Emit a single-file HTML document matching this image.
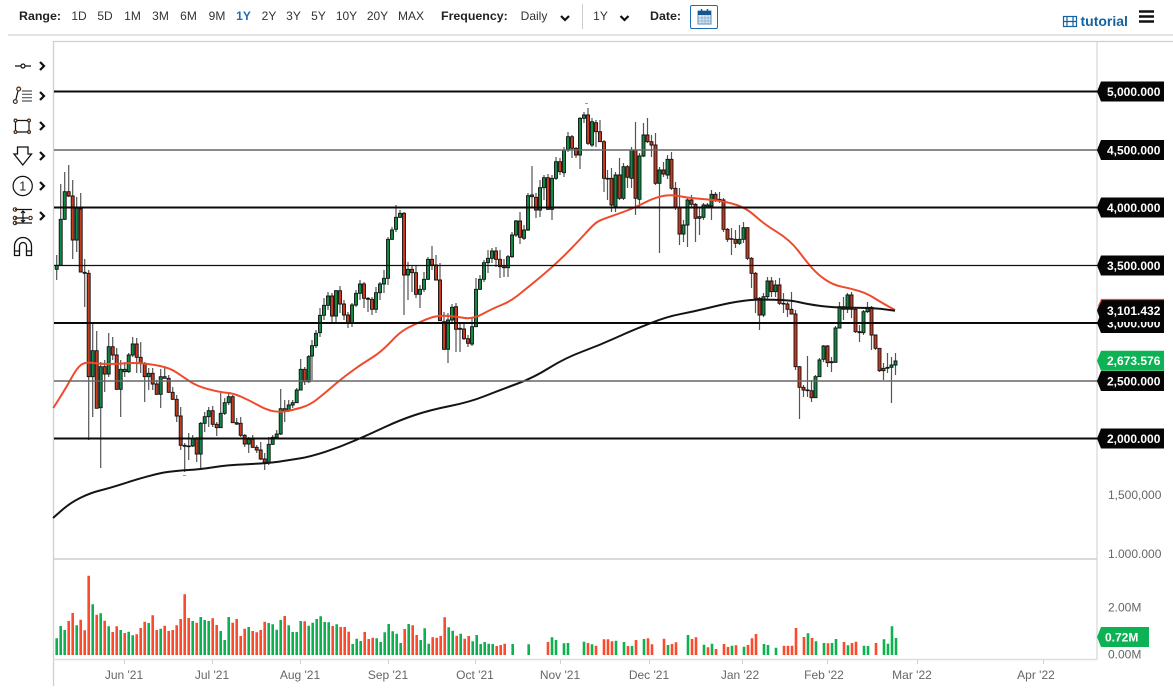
<!DOCTYPE html>
<html><head><meta charset="utf-8"><title>Chart</title>
<style>
html,body{margin:0;padding:0;background:#fff;width:1173px;height:693px;overflow:hidden}
svg{display:block;font-family:"Liberation Sans",sans-serif;filter:blur(.3px)}
.h{font-size:12px;fill:#333;text-anchor:middle}
.b{font-size:12.4px;font-weight:bold;fill:#222}
.ax{font-size:12px;fill:#666}
.t{font-size:12px;fill:#666;text-anchor:middle}
.lb{font-size:12px;font-weight:bold;fill:#fff}
</style></head><body>
<svg width="1173" height="693" viewBox="0 0 1173 693" xmlns="http://www.w3.org/2000/svg">
<!-- header -->
<text class="b" x="19" y="20">Range:</text>
<text class="h" x="79" y="20">1D</text><text class="h" x="105" y="20">5D</text><text class="h" x="132.5" y="20">1M</text><text class="h" x="160.5" y="20">3M</text><text class="h" x="188.5" y="20">6M</text><text class="h" x="217" y="20">9M</text>
<text class="h" x="243.5" y="20" style="fill:#1c6db3;font-weight:bold">1Y</text>
<text class="h" x="269" y="20">2Y</text><text class="h" x="293.5" y="20">3Y</text><text class="h" x="318.5" y="20">5Y</text><text class="h" x="346.5" y="20">10Y</text><text class="h" x="377.5" y="20">20Y</text><text class="h" x="411" y="20">MAX</text>
<text class="b" x="441" y="20">Frequency:</text><text class="h" x="534" y="20">Daily</text>
<path d="M561 16l4 4 4-4M620.5 16l4 4 4-4" fill="none" stroke="#111" stroke-width="2.2"/>
<path d="M582.5 4V29" stroke="#ccc"/>
<text class="h" x="600.5" y="20">1Y</text>
<text class="b" x="650" y="20">Date:</text>
<rect x="690.5" y="5.5" width="27" height="23" rx="1.5" fill="#fff" stroke="#1c6db3"/>
<g stroke="#14548f" fill="none"><rect x="698" y="11" width="13" height="13" stroke="#5b8db8" fill="#dbe9f4"/><path d="M698.5 11.5h12v3h-12z" fill="#14548f"/><path d="M701.5 9v3M707.5 9v3" stroke-width="1.5"/><path d="M702 15v9M705 15v9M708 15v9M698 18h13M698 21h13" stroke="#7ea6c8" stroke-width=".7"/></g>
<g fill="none" stroke="#14629f" stroke-width="1.2"><rect x="1063.5" y="16.5" width="13" height="10"/><path d="M1067 16.5v10M1073 16.5v10M1063.5 21.5h13" /></g>
<text x="1080.5" y="26" style="font-size:14px;font-weight:bold;fill:#14629f">tutorial</text>
<path d="M1139 11.5h15M1139 16.5h15M1139 21.5h15" stroke="#111" stroke-width="2.4"/>
<path d="M8 35H1173" stroke="#d2d2d2" stroke-width="1.2"/>
<path d="M53 41.5H1173" stroke="#cfcfcf" stroke-width="1.3"/>
<path d="M53.5 41V686" stroke="#cfcfcf" stroke-width="1.3"/>
<path d="M1097 41V660" stroke="#d8d8d8" stroke-width="1.3"/>

<!-- tools -->
<g fill="none" stroke="#111" stroke-width="1.2">
<path d="M15 66h6M25 66h6"/><circle cx="23" cy="66" r="2"/>
<path d="M16 99L18 91"/><circle cx="18.7" cy="89" r="1.9" stroke="#4a2a10"/><circle cx="15.3" cy="101.5" r="1.9" stroke="#4a2a10"/>
<path d="M22 91h10M22 94.3h10M22 97.7h10M22 101h10" stroke="#555"/>
<path d="M15.5 122V130.5M29 122V130.5M17 120.5H27.5M17 132H27.5"/><circle cx="15.5" cy="120.5" r="1.4" stroke="#4a2a10"/><circle cx="29" cy="120.5" r="1.4" stroke="#4a2a10"/><circle cx="15.5" cy="132" r="1.4" stroke="#4a2a10"/><circle cx="29" cy="132" r="1.4" stroke="#4a2a10"/>
<path d="M17.5 147H28V154H31.5L22.8 165 14 154H17.5Z" stroke-width="1.3"/>
<circle cx="22.7" cy="186" r="9.6"/>
<path d="M15 209.5H32M15 218H28M15 223H32"/><path d="M23 211V222M21 213l2-2 2 2M21 220l2 2 2-2"/>
<circle cx="15" cy="209.5" r="1.7" stroke="#4a2a10"/><circle cx="15" cy="218" r="1.7" stroke="#4a2a10"/><circle cx="15" cy="223" r="1.7" stroke="#4a2a10"/><circle cx="30.5" cy="218" r="1.7" stroke="#4a2a10"/>
<path d="M14.5 255.5V246a8.5 8.5 0 0 1 17 0V255.5h-5V246a3.5 3.5 0 0 0-7 0V255.5zM14.5 251h5M26.5 251h5" stroke-width="1.3"/>
</g>
<text x="22.7" y="190.5" style="font-size:12.5px;fill:#222;text-anchor:middle">1</text>
<path d="M40 62l4 4-4 4M40 92l4 4-4 4M40 122l4 4-4 4M40 152l4 4-4 4M40 182l4 4-4 4M40 212l4 4-4 4" fill="none" stroke="#111" stroke-width="2.2"/>

<g>
<!-- wicks -->
<path fill="none" stroke="#555" stroke-width="1.2" d="M56.7 255V280M60.7 184V265M64.7 172V220M68.7 165V197M72.7 180V259M76.7 197V252M80.7 193V272M84.7 259V307M88.7 270V440M92.7 323V417M96.7 331V408M100.7 362V468M104.7 360V392M108.7 333V377M112.7 337V360M116.7 348V390M120.7 360V417M124.7 362V377M128.7 353V373M132.7 337V357M136.7 338V373M140.7 342V373M144.7 362V402M148.7 368V390M152.7 368V390M156.7 380V395M160.7 369V408M164.7 366V378M168.7 375V393M172.7 387V400M176.7 395V422M180.7 407V450M184.7 443V472M188.7 433V460M192.7 435V447M196.7 437V462M200.7 422V470M204.7 412V432M208.7 407V427M212.7 406V427M216.7 422V436M220.7 393V428M224.7 398V415M228.7 392V405M232.7 395V423M236.7 418V425M240.7 417V437M244.7 434V447M248.7 437V453M252.7 435V448M256.7 445V453M260.7 442V460M264.7 453V470M268.7 437V465M272.7 435V445M276.7 430V437M280.7 389V435M284.7 400V422M288.7 400V412M292.7 400V408M296.7 388V403M300.7 359V390M304.7 367V385M308.7 355V383M312 340V380M316 330V348M320 308V337M324 298V320M328 292V310M332 293V324M336 290V323M340 286V313M344 300V320M348 312V328M352 303V327M356 290V307M360 280V300M364 282V308M368 297V312M372 297V315M376 287V313M380 282V300M384 270V293M388 237V285M392 227V240M396 205V232M400 210V218M404 212V315M408 262V300M412 265V292M416 265V298M420 285V308M424 272V292M428 257V280M432 246V270M436 255V280M440 263V320M444 312V350M448 313V363M452 304V322M456 303V352M460 322V352M464 323V340M468 335V347M472 318V346M476 278V327M480 275V290M484 260V282M488 250V273M492 248V263M496 247V267M500 250V278M504 259V277M508 255V277M512 232V258M516 220V237M520 212V244M524 225V240M528 193V231M532 166V207M536 193V218M540 180V217M544 175V200M548 174V210M552 175V220M556 157V180M560 158V175M564 147V177M568 132V152M572 135V158M576 147V158M580 117V169M584 112V123M588 108V145M592 118V147M596 120V147M600 120V142M604 140V192M607.5 170V200M611.5 168V212M615.5 172V212M619.5 158V200M623.5 163V200M627.5 165V188M631.5 147V188M635.5 122V215M639.5 153V207M643.5 123V157M647.5 118V143M651.5 135V157M655.5 133V185M659.5 167V253M663.5 162V177M667.5 155V179M671.5 152V190M675.5 182V210M679.5 188V245M683.5 220V242M687.5 197V247M691.5 195V207M695.5 203V242M699.5 207V235M703.5 203V220M707.5 203V208M711.5 190V220M715.5 192V202M719.5 192V203M723.5 198V232M727.5 228V242M731.5 228V255M735.5 230V248M739.5 225V245M743.5 222V243M747.5 227V260M751.5 257V288M755.5 272V313M759.5 297V330M763.5 293V317M767.5 277V300M771.5 277V297M775.5 280V297M779.5 278V305M783.5 293V313M787.5 302V317M791.5 292V314M795.5 310V370M799.5 366V419M803.5 385V397M807.5 356V397M811.5 380V402M815.5 375V398M819.5 358V377M823.5 345V362M827.5 345V367M831.5 357V372M835.5 326V363M839.5 302V328M843.5 297V320M847.5 293V313M851.5 292V318M855.5 308V333M859.5 325V342M863.5 310V335M867.5 302V313M871.5 306V350M875.5 335V350M879.5 348V372M883.5 363V380M887.5 353V373M891.5 357V403M895.5 353V375"/>
<!-- green bodies -->
<path fill="#0c8b46" stroke="#111" stroke-width=".9" d="M55.2 265.3h3V269.3h-3zM59.2 219.3h3V265.3h-3zM63.2 191.7h3V219.3h-3zM75.2 208.3h3V240h-3zM91.2 350.7h3V376.7h-3zM99.2 366.7h3V407.7h-3zM107.2 346.7h3V374h-3zM119.2 369.3h3V389.3h-3zM123.2 369.3h3V371.7h-3zM127.2 355h3V371.7h-3zM131.2 344h3V355h-3zM147.2 373.3h3V376.7h-3zM159.2 376.7h3V394.3h-3zM191.2 438.3h3V446h-3zM199.2 423.3h3V454h-3zM203.2 416.7h3V423.3h-3zM207.2 410.7h3V416.7h-3zM219.2 413.3h3V427.7h-3zM223.2 402.7h3V413.3h-3zM227.2 396.7h3V402.7h-3zM247.2 439.3h3V444h-3zM267.2 444.3h3V462.3h-3zM271.2 437.3h3V444.3h-3zM275.2 434h3V437.3h-3zM279.2 408.7h3V434h-3zM287.2 405h3V410.7h-3zM291.2 402.7h3V405h-3zM295.2 390h3V402.7h-3zM299.2 369.3h3V390h-3zM307.2 356.7h3V381.7h-3zM310.5 345.7h3V356h-3zM314.5 333.3h3V345.7h-3zM318.5 315.3h3V332.7h-3zM322.5 305.3h3V315.3h-3zM326.5 296h3V305.3h-3zM334.5 290.7h3V316h-3zM350.5 305h3V322.7h-3zM354.5 293.3h3V305h-3zM358.5 284h3V293.3h-3zM374.5 292.7h3V309.3h-3zM378.5 284h3V292.7h-3zM382.5 278.3h3V284h-3zM386.5 239.3h3V278.3h-3zM390.5 230h3V239.3h-3zM394.5 217.3h3V229.3h-3zM398.5 213.3h3V217.3h-3zM406.5 269.3h3V275h-3zM418.5 289.3h3V294.3h-3zM422.5 279.3h3V289.3h-3zM426.5 259.3h3V279.3h-3zM446.5 320h3V349.3h-3zM450.5 307.3h3V320h-3zM470.5 326.7h3V344h-3zM474.5 289.3h3V326.7h-3zM478.5 279.3h3V289.3h-3zM482.5 262.7h3V279.3h-3zM486.5 258.3h3V262.7h-3zM490.5 251h3V258.3h-3zM506.5 256.7h3V267.7h-3zM510.5 235h3V256.7h-3zM514.5 221h3V235h-3zM522.5 230h3V238.3h-3zM526.5 195.7h3V230h-3zM538.5 187.7h3V210h-3zM542.5 177.7h3V187.7h-3zM550.5 178.3h3V209.3h-3zM554.5 161.7h3V178.3h-3zM562.5 150h3V172.7h-3zM566.5 136.7h3V149.3h-3zM578.5 118.3h3V155h-3zM582.5 115h3V118.3h-3zM590.5 121.7h3V145h-3zM614 175h3V206.7h-3zM622 166.7h3V198.3h-3zM630 150h3V178.3h-3zM638 156h3V199.3h-3zM642 135h3V156h-3zM658 170h3V183.3h-3zM666 159.3h3V175h-3zM682 225h3V234h-3zM686 200h3V225h-3zM698 216.7h3V218.3h-3zM702 205h3V217.3h-3zM706 205h3V206.7h-3zM710 194.3h3V206h-3zM738 239.3h3V243.3h-3zM742 227.7h3V239.3h-3zM762 296.7h3V315h-3zM766 281h3V296.7h-3zM774 285h3V291.7h-3zM814 376.7h3V397.7h-3zM818 360h3V376.7h-3zM822 346h3V359.3h-3zM834 328h3V362.3h-3zM838 306.7h3V328h-3zM846 295h3V309.3h-3zM862 311.7h3V332.7h-3zM866 307.3h3V311.7h-3zM882 368.3h3V370.7h-3zM890 365h3V367.3h-3zM894 361h3V365h-3z"/>
<!-- red bodies -->
<path fill="#c63a1e" stroke="#111" stroke-width=".9" d="M67.2 191.7h3V196h-3zM71.2 196h3V240h-3zM79.2 209h3V272h-3zM83.2 272.3h3V273.3h-3zM87.2 273.3h3V376.7h-3zM95.2 350.7h3V408.3h-3zM103.2 366.7h3V374h-3zM111.2 346.7h3V355h-3zM115.2 355h3V389.3h-3zM135.2 344h3V357.3h-3zM139.2 357.3h3V363.3h-3zM143.2 363.3h3V376.7h-3zM151.2 373.3h3V384h-3zM155.2 384h3V394.3h-3zM163.2 376.7h3V378.3h-3zM167.2 378.3h3V392.3h-3zM171.2 392.3h3V399.3h-3zM175.2 399.3h3V416h-3zM179.2 416h3V445.3h-3zM183.2 445.3h3V446.3h-3zM187.2 446h3V446.7h-3zM195.2 438.3h3V454h-3zM211.2 410.7h3V424.3h-3zM215.2 424.3h3V427.7h-3zM231.2 396.7h3V422.7h-3zM235.2 422.7h3V424h-3zM239.2 423.3h3V435.3h-3zM243.2 435.3h3V444h-3zM251.2 439.3h3V447.3h-3zM255.2 447.3h3V450h-3zM259.2 450h3V459h-3zM263.2 459h3V462.3h-3zM283.2 408.7h3V410.7h-3zM303.2 369.3h3V381.7h-3zM330.5 296h3V316h-3zM338.5 290.7h3V304h-3zM342.5 304h3V315h-3zM346.5 315h3V322.7h-3zM362.5 284h3V298.3h-3zM366.5 298.3h3V299.3h-3zM370.5 299.3h3V309.3h-3zM402.5 213.3h3V275h-3zM410.5 269.3h3V272.7h-3zM414.5 272.7h3V294.3h-3zM430.5 259.3h3V265h-3zM434.5 265h3V280h-3zM438.5 280h3V320.7h-3zM442.5 321.7h3V349.3h-3zM454.5 306.7h3V329.3h-3zM458.5 328.3h3V329.3h-3zM462.5 329h3V338.7h-3zM466.5 338.7h3V343.3h-3zM494.5 251h3V259.3h-3zM498.5 259.3h3V266.7h-3zM502.5 266.7h3V267.7h-3zM518.5 221h3V237.3h-3zM530.5 195h3V196.7h-3zM534.5 197.3h3V210h-3zM546.5 177.7h3V209.3h-3zM558.5 161.7h3V171.7h-3zM570.5 136.7h3V148.3h-3zM574.5 148.3h3V155h-3zM586.5 115h3V143.3h-3zM594.5 122.7h3V131.7h-3zM598.5 131.7h3V141.7h-3zM602.5 141.7h3V178.3h-3zM606 178.3h3V179h-3zM610 178.3h3V205h-3zM618 175h3V198.3h-3zM626 166.7h3V177.3h-3zM634 150h3V198.3h-3zM646 135h3V141.7h-3zM650 141.7h3V145h-3zM654 145h3V183.3h-3zM662 170h3V174h-3zM670 159.3h3V188.3h-3zM674 188.3h3V207.3h-3zM678 207.3h3V234h-3zM690 200h3V204.3h-3zM694 204.3h3V218.3h-3zM714 194.3h3V200h-3zM718 199.3h3V200.7h-3zM722 200h3V229.3h-3zM726 229.3h3V239.3h-3zM730 238.7h3V239.3h-3zM734 239.3h3V243.3h-3zM746 227.7h3V258.3h-3zM750 258.3h3V273.3h-3zM754 273.3h3V298.3h-3zM758 298.3h3V315h-3zM770 281h3V291.7h-3zM778 285h3V303.3h-3zM782 303.3h3V304h-3zM786 304h3V309.3h-3zM790 309.3h3V314h-3zM794 314h3V366.7h-3zM798 366.7h3V387.3h-3zM802 387.3h3V390h-3zM806 390h3V390.7h-3zM810 390.7h3V397.7h-3zM826 346h3V362.7h-3zM830 361.7h3V362.7h-3zM842 306.7h3V309.3h-3zM850 295h3V309.3h-3zM854 309.3h3V331.7h-3zM858 331.7h3V332.7h-3zM870 307.3h3V335h-3zM874 335h3V348.3h-3zM878 348.3h3V370.7h-3zM886 367.3h3V368.3h-3z"/>
<!-- MAs -->
<path fill="none" stroke="#f04a2c" stroke-width="2" stroke-linejoin="round" d="M53.3 408L60 397.4Q66.7 386.7 71.7 377.5Q76.7 368.3 80.9 365Q85 361.7 92.5 362.9Q100 364 108.4 364Q116.7 364 124.9 363.4Q133 362.7 141.5 363.4Q150 364 160 366Q170 368 176.5 372.4Q183 376.7 189.9 381.4Q196.7 386 208.4 389.2Q220 392.3 226.5 392.7Q233 393 241.5 396.9Q250 400.7 258.4 405.4Q266.7 410 273.4 411.2Q280 412.3 286.5 411.2Q293 410 301.5 407.5Q310 405 317.5 399Q325 393 332.5 386.5Q340 380 350 372.5Q360 365 370.9 358.4Q381.7 351.7 390.9 341.7Q400 331.7 408.4 327.5Q416.7 323.3 426.7 319.2Q436.7 315 446.7 315.9Q456.7 316.7 464.9 318Q473 319.3 483 313.8Q493 308.3 501.5 305Q510 301.7 518.4 295Q526.7 288.3 539.9 277.5Q553 266.7 564.9 254.9Q576.7 243 584.9 234Q593 225 596.5 222.5Q600 220 610 216.7Q620 213.3 628.4 210Q636.7 206.7 644.9 202.5Q653 198.3 661.5 196.3Q670 194.3 678.4 196Q686.7 197.7 696.7 198.5Q706.7 199.3 716.7 200.5Q726.7 201.7 736.7 205Q746.7 208.3 754.9 215.8Q763 223.3 776.5 231.7Q790 240 798.4 251Q806.7 262 812.5 268.5Q818.3 275 825.8 280Q833.3 285 841.7 286.7Q850 288.3 858.4 290.8Q866.7 293.3 873.4 297.5Q880 301.7 887.5 305.9L895 310"/>
<path fill="none" stroke="#141414" stroke-width="2" stroke-linejoin="round" d="M53 518L61.5 510.5Q70 503 80 498Q90 493 100 490.5Q110 488 123.4 483.7Q136.7 479.3 148.4 476.2Q160 473 168.4 471.9Q176.7 470.7 188.4 470Q200 469.3 213.4 467.2Q226.7 465 246.7 464.2Q266.7 463.3 278.4 461.7Q290 460 300 458.4Q310 456.7 325 451.9Q340 447 355 440.5Q370 434 385 427Q400 420 415 415Q430 410 450 406Q470 402 485 396Q500 390 516.5 384Q533 378 549 368Q565 358 582.5 351.5Q600 345 616.5 337.5Q633 330 649.9 323.4Q666.7 316.7 679.9 314.2Q693 311.7 706.5 308.4Q720 305 730 303Q740 301 748.4 300.2Q756.7 299.3 773.4 299.7Q790 300 798.4 302Q806.7 304 819.9 305.9Q833 307.7 853 307.7Q873 307.7 884 309.2L895 310.7"/>
<path d="M183 475.5h3M585 103.5h3" stroke="#f07a66" stroke-width="1"/>
<!-- levels -->
<g fill="none">
<path d="M54 91.5H1100M54 207.5H1100M54 323H1100M54 438.5H1100" stroke="#0a0a0a" stroke-width="2"/>
<path d="M54 265.5H1100" stroke="#111" stroke-width="1.3"/>
<path d="M54 150H1100M54 381H1100" stroke="#666" stroke-width="1.4"/>
</g>
<!-- volume -->
<path fill="none" stroke="#0db14f" stroke-width="2.6" d="M56.7 655V638.3M60.7 655V626M64.7 655V630M76.7 655V625.3M92.7 655V604.3M100.7 655V613.3M108.7 655V626.3M120.7 655V630M128.7 655V631.7M132.7 655V635.3M148.7 655V623M160.7 655V628.7M192.7 655V621M200.7 655V617M204.7 655V620M208.7 655V621M220.7 655V631M224.7 655V640M228.7 655V617M248.7 655V627M268.7 655V623M272.7 655V624.3M276.7 655V629.7M280.7 655V620M288.7 655V625.3M292.7 655V632M296.7 655V632M300.7 655V621M308.7 655V625.7M312.7 655V622.7M316.7 655V619M320.7 655V616.3M324.7 655V622M328.7 655V622.3M336.7 655V624.3M352.7 655V644M356.7 655V638.7M360.7 655V641M376.7 655V638.3M380.7 655V642M384.7 655V632.3M388.7 655V624M392.7 655V631.3M396.7 655V633.7M400.7 655V643M408.7 655V624M420.7 655V640M424.7 655V628.3M428.7 655V643.7M448.7 655V627.3M452.7 655V630.7M460.7 655V633.7M472.7 655V641.3M476.7 655V635M480.7 655V644M484.7 655V642M488.7 655V643.7M492.7 655V644M512.7 655V644M528.7 655V644.3M552 655V637.3M556 655V640M564 655V643.3M568 655V643M584 655V641.7M592 655V644.3M616 655V640.7M624 655V642M632 655V646M644 655V639M668 655V645M688 655V635M704 655V644.7M712 655V643.7M732 655V645.7M744 655V646.7M764 655V644M768 655V645M776 655V647.7M808 655V633.3M816 655V641.3M824 655V643M832 655V643M836 655V639M848 655V645.3M864 655V645.7M868 655V646M884 655V639.3M888 655V643.7M892 655V626.3M896 655V638"/>
<path fill="none" stroke="#fb4a2c" stroke-width="2.6" d="M68.7 655V621M72.7 655V613M80.7 655V619.7M84.7 655V630.3M88.7 655V575.7M96.7 655V614.7M104.7 655V620.7M112.7 655V632M116.7 655V626.3M124.7 655V633M136.7 655V634.3M140.7 655V628M144.7 655V621.7M152.7 655V615.3M156.7 655V630M164.7 655V625.7M168.7 655V631M172.7 655V630M176.7 655V625.3M180.7 655V619M184.7 655V594.3M188.7 655V618M196.7 655V622.7M212.7 655V618.3M216.7 655V625M232.7 655V622.7M236.7 655V619M240.7 655V636M244.7 655V628.7M252.7 655V631M256.7 655V632.3M260.7 655V630M264.7 655V621.7M284.7 655V616M304.7 655V621.3M332.7 655V626M340.7 655V627M344.7 655V627M348.7 655V631.7M364.7 655V632M368.7 655V639M372.7 655V637.7M404.7 655V629M412.7 655V625.3M416.7 655V635M432.7 655V637.3M436.7 655V637.7M440.7 655V636M444.7 655V617.3M456.7 655V635.7M464.7 655V638.7M468.7 655V636M496.7 655V646M500.7 655V645M504.7 655V643.7M548 655V642M588 655V643M596 655V645.7M604 655V639.3M608 655V639.3M612 655V641.3M628 655V646M636 655V640M648 655V638.3M652 655V644.3M664 655V638.7M672 655V644M676 655V642.3M692 655V639M696 655V637.3M708 655V647.3M716 655V649M724 655V644M728 655V647M736 655V645.3M748 655V645M752 655V638.3M756 655V634M784 655V645.7M788 655V645.7M792 655V645.7M796 655V628M804 655V637M812 655V638M828 655V643.3M844 655V642M852 655V643M856 655V641.7M876 655V643"/>
</g>
<path d="M53 559H1097" stroke="#cdcdcd" stroke-width="1.6"/>
<path d="M53 659.5H1097" stroke="#dedede" stroke-width="1.6"/>
<path d="M124.5 660v4M212.5 660v4M300.5 660v4M388.5 660v4M475.5 660v4M560.5 660v4M649.5 660v4M742.5 660v4M827.5 660v4M917.5 660v4M1043.5 660v4" stroke="#d0d0d0"/>
<text class="t" x="124" y="679">Jun '21</text><text class="t" x="212" y="679">Jul '21</text><text class="t" x="300" y="679">Aug '21</text><text class="t" x="388" y="679">Sep '21</text><text class="t" x="475" y="679">Oct '21</text><text class="t" x="560" y="679">Nov '21</text><text class="t" x="649" y="679">Dec '21</text><text class="t" x="740" y="679">Jan '22</text><text class="t" x="824" y="679">Feb '22</text><text class="t" x="912" y="679">Mar '22</text><text class="t" x="1036" y="679">Apr '22</text>

<!-- right axis -->
<text class="ax" x="1108" y="499">1,500,000</text>
<text class="ax" x="1108" y="558">1,000,000</text>
<rect x="1098" y="558" width="75" height="8" fill="#fff"/>
<text class="ax" x="1108" y="611.5">2.00M</text>
<text class="ax" x="1108" y="658.5">0.00M</text>
<g>
<path d="M1097 91.5l4-10H1164V101.5H1101Z" fill="#050505"/>
<path d="M1097 150l4-10H1164V160H1101Z" fill="#050505"/>
<path d="M1097 207.5l4-10H1164V217.5H1101Z" fill="#050505"/>
<path d="M1097 265.5l4-10H1164V275.5H1101Z" fill="#050505"/>
<path d="M1097 323l4-10H1164V333H1101Z" fill="#050505"/>
<path d="M1097 381l4-10H1164V391H1101Z" fill="#050505"/>
<path d="M1097 438.5l4-10H1164V448.5H1101Z" fill="#050505"/>
</g>
<text class="lb" x="1107" y="96">5,000.000</text>
<text class="lb" x="1107" y="154.5">4,500.000</text>
<text class="lb" x="1107" y="212">4,000.000</text>
<text class="lb" x="1107" y="270">3,500.000</text>
<text class="lb" x="1107" y="327.5">3,000.000</text>
<path d="M1097 310.5l4-11H1164V322H1101Z" fill="#050505"/>
<path d="M1098.5 306l3-6.5H1164" fill="none" stroke="#f04a2c" stroke-width="1.2"/>
<text class="lb" x="1107" y="315">3,101.432</text>
<path d="M1097 360.7l4-10H1164V370.7H1101Z" fill="#0db254"/>
<text class="lb" x="1107" y="365">2,673.576</text>
<text class="lb" x="1107" y="385.5">2,500.000</text>
<text class="lb" x="1107" y="443">2,000.000</text>
<path d="M1097 637l4-10H1149V647H1101Z" fill="#0db254"/>
<text class="lb" x="1105" y="641.5">0.72M</text>
</svg>
</body></html>
